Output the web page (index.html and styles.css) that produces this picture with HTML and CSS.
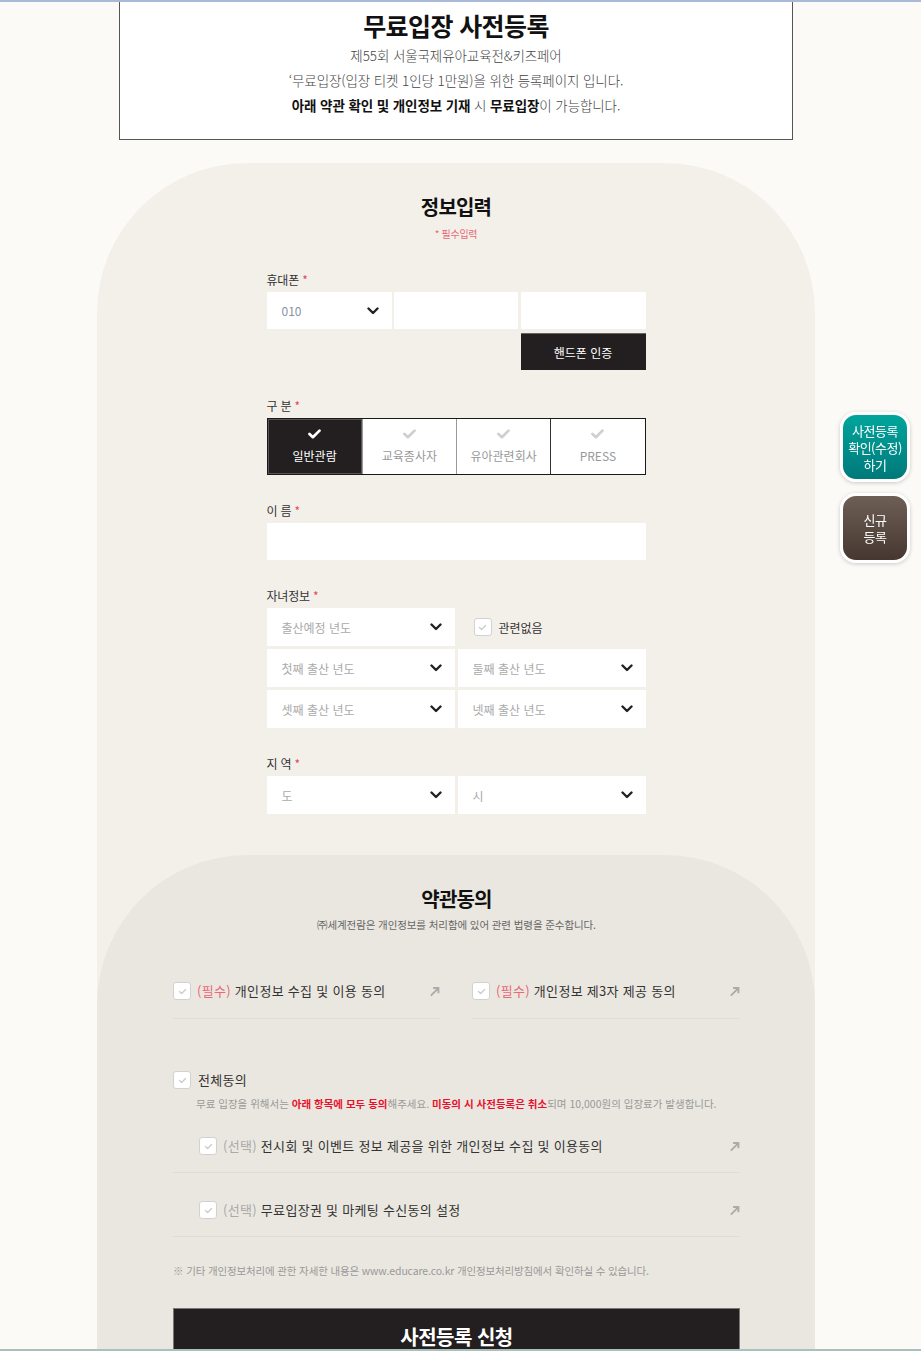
FILE: index.html
```html
<!DOCTYPE html>
<html lang="ko">
<head>
<meta charset="utf-8">
<title>무료입장 사전등록</title>
<link rel="stylesheet" href="styles.css">
</head>
<body>
<div class="frame-top"></div>
<div class="page">
  <header class="intro">
    <h1 class="intro-title">무료입장 사전등록</h1>
    <div class="intro-lines">
      <p>제55회 서울국제유아교육전&amp;키즈페어</p>
      <p>‘무료입장(입장 티켓 1인당 1만원)을 위한 등록페이지 입니다.</p>
      <p><b>아래 약관 확인 및 개인정보 기재</b> 시 <b>무료입장</b>이 가능합니다.</p>
    </div>
  </header>

  <section class="panel">
    <h2 class="panel-title">정보입력</h2>
    <p class="req-note">* 필수입력</p>

    <div class="form">
      <div class="field">
        <div class="label">휴대폰 <span class="star">*</span></div>
        <div class="phone-row">
          <div class="select"><span class="ph dark">010</span><svg class="chev" viewBox="0 0 12 8"><path d="M1.5 1.5 6 6l4.5-4.5"/></svg></div>
          <div class="input"></div>
          <div class="input"></div>
        </div>
        <div class="btn-row"><button class="verify">핸드폰 인증</button></div>
      </div>

      <div class="field">
        <div class="label">구 분 <span class="star">*</span></div>
        <div class="toggle">
          <div class="opt on"><svg class="tick" viewBox="0 0 14 11"><path d="M1.5 5.5 5.2 9 12.5 1.8"/></svg><span>일반관람</span></div>
          <div class="opt"><svg class="tick" viewBox="0 0 14 11"><path d="M1.5 5.5 5.2 9 12.5 1.8"/></svg><span>교육종사자</span></div>
          <div class="opt"><svg class="tick" viewBox="0 0 14 11"><path d="M1.5 5.5 5.2 9 12.5 1.8"/></svg><span>유아관련회사</span></div>
          <div class="opt"><svg class="tick" viewBox="0 0 14 11"><path d="M1.5 5.5 5.2 9 12.5 1.8"/></svg><span>PRESS</span></div>
        </div>
      </div>

      <div class="field">
        <div class="label">이 름 <span class="star">*</span></div>
        <div class="input full"></div>
      </div>

      <div class="field">
        <div class="label">자녀정보 <span class="star">*</span></div>
        <div class="grid2">
          <div class="select"><span class="ph">출산예정 년도</span><svg class="chev" viewBox="0 0 12 8"><path d="M1.5 1.5 6 6l4.5-4.5"/></svg></div>
          <div class="none-check"><span class="cbox"><svg viewBox="0 0 10 8"><path d="M1.5 4 4 6.3 8.5 1.7"/></svg></span><span>관련없음</span></div>
          <div class="select"><span class="ph">첫째 출산 년도</span><svg class="chev" viewBox="0 0 12 8"><path d="M1.5 1.5 6 6l4.5-4.5"/></svg></div>
          <div class="select"><span class="ph">둘째 출산 년도</span><svg class="chev" viewBox="0 0 12 8"><path d="M1.5 1.5 6 6l4.5-4.5"/></svg></div>
          <div class="select"><span class="ph">셋째 출산 년도</span><svg class="chev" viewBox="0 0 12 8"><path d="M1.5 1.5 6 6l4.5-4.5"/></svg></div>
          <div class="select"><span class="ph">넷째 출산 년도</span><svg class="chev" viewBox="0 0 12 8"><path d="M1.5 1.5 6 6l4.5-4.5"/></svg></div>
        </div>
      </div>

      <div class="field">
        <div class="label">지 역 <span class="star">*</span></div>
        <div class="grid2">
          <div class="select"><span class="ph">도</span><svg class="chev" viewBox="0 0 12 8"><path d="M1.5 1.5 6 6l4.5-4.5"/></svg></div>
          <div class="select"><span class="ph">시</span><svg class="chev" viewBox="0 0 12 8"><path d="M1.5 1.5 6 6l4.5-4.5"/></svg></div>
        </div>
      </div>
    </div>

    <section class="terms">
      <h2 class="panel-title">약관동의</h2>
      <p class="terms-sub">㈜세계전람은 개인정보를 처리함에 있어 관련 법령을 준수합니다.</p>

      <div class="req-row">
        <div class="agree">
          <span class="cbox"><svg viewBox="0 0 10 8"><path d="M1.5 4 4 6.3 8.5 1.7"/></svg></span>
          <span class="agree-text"><em class="must">(필수)</em> 개인정보 수집 및 이용 동의</span>
          <svg class="arrow" viewBox="0 0 12 12"><path d="M2 10.5 10 2.5M4.5 2.2h5.8v5.8"/></svg>
        </div>
        <div class="agree">
          <span class="cbox"><svg viewBox="0 0 10 8"><path d="M1.5 4 4 6.3 8.5 1.7"/></svg></span>
          <span class="agree-text"><em class="must">(필수)</em> 개인정보 제3자 제공 동의</span>
          <svg class="arrow" viewBox="0 0 12 12"><path d="M2 10.5 10 2.5M4.5 2.2h5.8v5.8"/></svg>
        </div>
      </div>

      <div class="all">
        <div class="all-head">
          <span class="cbox"><svg viewBox="0 0 10 8"><path d="M1.5 4 4 6.3 8.5 1.7"/></svg></span>
          <span class="all-text">전체동의</span>
        </div>
        <p class="all-note">무료 입장을 위해서는 <strong>아래 항목에 모두 동의</strong>해주세요. <strong>미동의 시 사전등록은 취소</strong>되며 10,000원의 입장료가 발생합니다.</p>
      </div>

      <div class="agree sub">
        <span class="cbox"><svg viewBox="0 0 10 8"><path d="M1.5 4 4 6.3 8.5 1.7"/></svg></span>
        <span class="agree-text"><em class="opt-tag">(선택)</em> 전시회 및 이벤트 정보 제공을 위한 개인정보 수집 및 이용동의</span>
        <svg class="arrow" viewBox="0 0 12 12"><path d="M2 10.5 10 2.5M4.5 2.2h5.8v5.8"/></svg>
      </div>
      <div class="agree sub">
        <span class="cbox"><svg viewBox="0 0 10 8"><path d="M1.5 4 4 6.3 8.5 1.7"/></svg></span>
        <span class="agree-text"><em class="opt-tag">(선택)</em> 무료입장권 및 마케팅 수신동의 설정</span>
        <svg class="arrow" viewBox="0 0 12 12"><path d="M2 10.5 10 2.5M4.5 2.2h5.8v5.8"/></svg>
      </div>

      <p class="footnote">※ 기타 개인정보처리에 관한 자세한 내용은 www.educare.co.kr 개인정보처리방침에서 확인하실 수 있습니다.</p>

      <button class="submit">사전등록 신청</button>
    </section>
  </section>
</div>

<nav class="side">
  <a class="side-btn teal">사전등록<br>확인(수정)<br>하기</a>
  <a class="side-btn brown">신규<br>등록</a>
</nav>
<div class="frame-bottom"></div>
</body>
</html>
```

FILE: styles.css
```css
* { box-sizing: border-box; }
html, body { margin: 0; padding: 0; }
body {
  background: #fbfaf7;
  font-family: "Noto Sans CJK KR", "Noto Sans", sans-serif;
  color: #333;
  height: 1351px;
  overflow: hidden;
}
p, h1, h2 { margin: 0; }
em { font-style: normal; }

.frame-top {
  position: fixed; left: 0; right: 0; top: 0; height: 2px;
  background: #a9b9d7; z-index: 10;
}
.frame-bottom {
  position: fixed; left: 0; right: 0; bottom: 0; height: 2px;
  background: #a9c0bc; z-index: 10;
}

.page {
  width: 912px;
  padding-top: 2px;
}

/* intro box */
.intro {
  width: 674px;
  margin: 0 auto;
  background: #fff;
  border: 1px solid #555;
  border-top: none;
  padding: 7px 0 21px;
  text-align: center;
}
.intro-title {
  font-size: 25px;
  line-height: 32px;
  font-weight: 700;
  letter-spacing: -0.6px;
  color: #111;
}
.intro-lines { margin-top: 2px; }
.intro-lines p {
  font-size: 13.5px;
  line-height: 25px;
  color: #444;
  letter-spacing: -0.1px;
  font-weight: 300;
}
.intro-lines b { font-weight: 700; color: #111; }

/* main panel */
.panel {
  width: 718px;
  margin: 23px auto 0;
  background: #f3f0ea;
  border-radius: 150px 150px 0 0;
  padding-top: 30px;
}
.panel-title {
  text-align: center;
  font-size: 20px;
  line-height: 28px;
  font-weight: 700;
  letter-spacing: -0.8px;
  color: #111;
}
.req-note {
  text-align: center;
  margin-top: 5px;
  font-size: 10px;
  line-height: 16px;
  color: #e8697a;
  letter-spacing: -0.3px;
}

.form {
  width: 379px;
  margin: 0 auto;
  padding: 30px 0 41px;
}
.field { margin-top: 28px; }
.field:first-child { margin-top: 0; }
.label {
  font-size: 12px;
  line-height: 16px;
  color: #333;
  margin-bottom: 4px;
  letter-spacing: -0.2px;
}
.star { color: #e8465a; }

.phone-row {
  display: grid;
  grid-template-columns: 125px 124px 1fr;
  gap: 2.5px;
}
.input, .select {
  background: #fff;
  height: 37px;
}
.select {
  display: flex;
  align-items: center;
  justify-content: space-between;
  padding: 0 13px 0 15px;
}
.ph {
  font-size: 12px;
  color: #aaa;
  letter-spacing: 0;
}
.ph.dark { color: #8a92a4; }
.chev {
  width: 12px; height: 8px;
  fill: none; stroke: #222; stroke-width: 2.4;
  stroke-linecap: round; stroke-linejoin: round;
}
.btn-row {
  display: flex;
  justify-content: flex-end;
  margin-top: 4px;
}
.verify {
  width: 125px;
  height: 37px;
  border: none;
  border-top: 1px solid #666;
  background: #231f20;
  color: #fff;
  font-family: inherit;
  font-size: 12px;
  letter-spacing: 0;
}

.toggle {
  display: grid;
  grid-template-columns: repeat(4, 1fr);
  height: 57px;
  border: 1px solid #1a1a1a;
  background: #fff;
}
.opt {
  display: flex;
  flex-direction: column;
  align-items: center;
  padding-top: 10px;
  border-left: 1px solid #999;
  font-size: 12px;
  color: #999;
  letter-spacing: 0;
}
.opt:first-child { border-left: none; }
.opt + .opt + .opt + .opt { border-left-color: #333; }
.opt span { margin-top: 9px; line-height: 16px; }
.tick {
  width: 13px; height: 10px;
  fill: none; stroke: #cfcfcf; stroke-width: 3;
  stroke-linecap: round; stroke-linejoin: round;
}
.opt.on { background: #231f20; color: #fff; border: 1px solid #555; padding-top: 9px; }
.opt.on .tick { stroke: #fff; }

.grid2 {
  display: grid;
  grid-template-columns: 188px 188px;
  gap: 3px;
}
.grid2 .select { height: 38px; }
.none-check {
  display: flex;
  align-items: center;
  gap: 7px;
  padding-left: 16px;
  font-size: 12px;
  color: #333;
}

.cbox {
  width: 18px; height: 18px;
  flex: 0 0 18px;
  border: 1px solid #d2d2d2;
  border-radius: 3px;
  background: #fff;
  display: inline-flex;
  align-items: center;
  justify-content: center;
}
.cbox svg {
  width: 9px; height: 7px;
  fill: none; stroke: #ccc; stroke-width: 1.5;
  stroke-linecap: round; stroke-linejoin: round;
}

/* terms */
.terms {
  background: #eae7e0;
  border-radius: 150px 150px 0 0;
  padding: 30px 75px 0 76px;
  height: 500px;
}
.terms-sub {
  text-align: center;
  margin-top: 4px;
  font-size: 10.5px;
  line-height: 16px;
  color: #666;
  letter-spacing: -0.1px;
}
.req-row {
  display: grid;
  grid-template-columns: 267px 268px;
  gap: 32px;
  margin-top: 48px;
}
.agree {
  display: flex;
  align-items: center;
  padding-bottom: 17px;
  border-bottom: 1px solid #e0ddd5;
  line-height: 20px;
}
.agree-text {
  flex: 1;
  margin-left: 6px;
  font-size: 13px;
  color: #333;
  letter-spacing: 0.3px;
}
.must { color: #e8697a; }
.opt-tag { color: #aaa; }
.arrow {
  width: 11px; height: 11px;
  fill: none; stroke: #aaa; stroke-width: 2;
  margin-right: 0;
}

.all { margin-top: 51px; }
.all-head {
  display: flex;
  align-items: center;
  line-height: 20px;
}
.all-text {
  margin-left: 7px;
  font-size: 13px;
  color: #333;
  letter-spacing: 0.3px;
}
.all-note {
  margin-top: 6px;
  padding-left: 23px;
  font-size: 10.5px;
  line-height: 16px;
  color: #999;
  letter-spacing: 0;
}
.all-note strong { color: #e8112d; font-weight: 700; }

.agree.sub {
  padding: 24px 0 16px 26px;
}
.agree.sub + .agree.sub { padding-top: 27px; }

.footnote {
  margin-top: 26px;
  font-size: 10.5px;
  line-height: 16px;
  color: #999;
  letter-spacing: -0.15px;
}
.submit {
  display: block;
  width: 100%;
  height: 60px;
  margin-top: 29px;
  padding: 0 0 4px;
  background: #231f20;
  border: 1px solid #777;
  border-bottom: none;
  color: #fff;
  font-family: inherit;
  font-size: 20px;
  line-height: 28px;
  font-weight: 700;
  letter-spacing: -0.5px;
}

/* side floating buttons */
.side {
  position: fixed;
  right: 11px;
  top: 412px;
  display: flex;
  flex-direction: column;
  gap: 11px;
}
.side-btn {
  width: 70px;
  height: 70px;
  border: 3px solid #fff;
  border-radius: 16px;
  box-shadow: 0 1px 4px rgba(0,0,0,0.2);
  display: flex;
  align-items: center;
  justify-content: center;
  text-align: center;
  color: #fff;
  font-size: 13px;
  line-height: 17px;
  letter-spacing: -0.5px;
}
.side-btn.teal { background: linear-gradient(#00a59c, #00797a); }
.side-btn.brown { background: linear-gradient(#6d5f56, #463830); }
```
